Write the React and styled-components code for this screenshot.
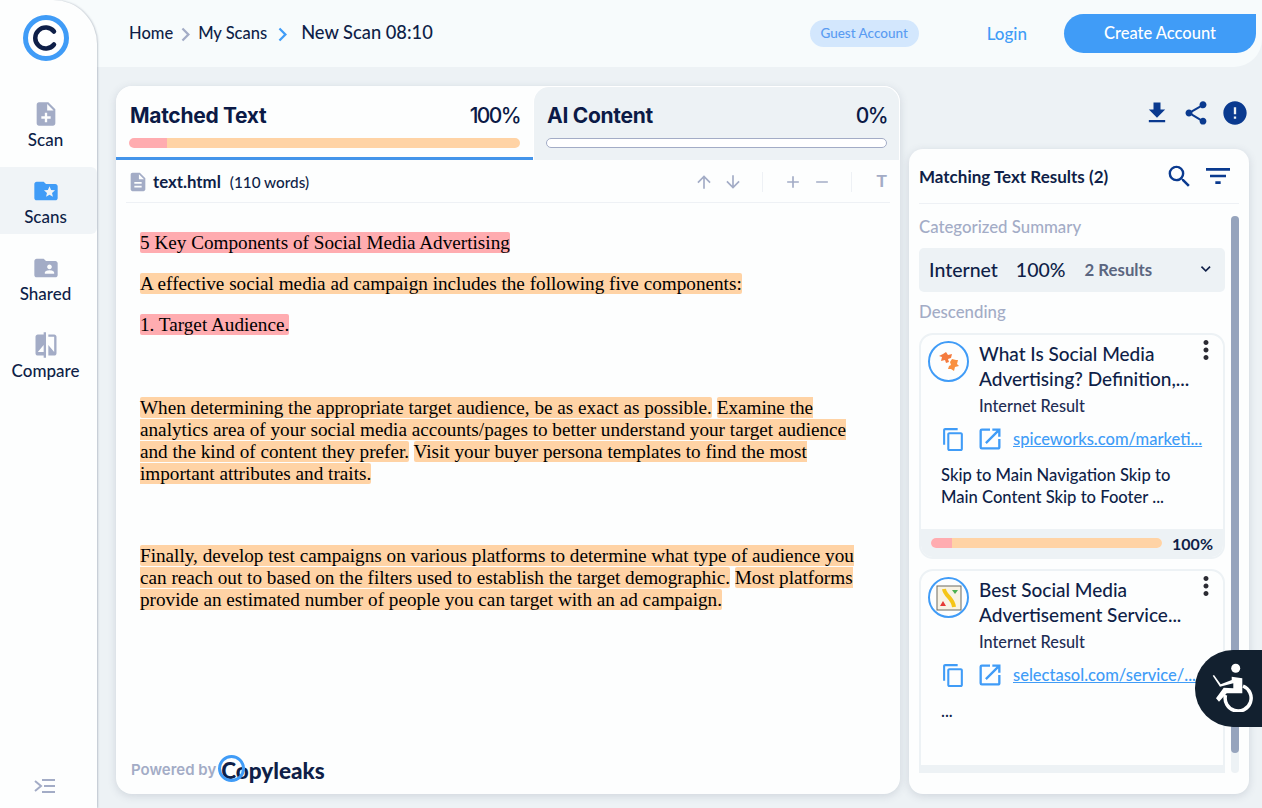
import React from 'react';
import styled, { createGlobalStyle } from 'styled-components';
import {
  MdNoteAdd, MdFolderSpecial, MdFolderShared, MdCompare, MdDescription, MdArrowUpward, MdArrowDownward,
  MdAdd, MdRemove, MdFileDownload, MdShare, MdError, MdSearch, MdFilterList, MdMoreVert, MdExpandMore,
  MdContentCopy, MdOpenInNew, MdChevronRight,
} from 'react-icons/md';

const GlobalStyle = createGlobalStyle`
  html, body { margin: 0; padding: 0; height: 100%; overflow: hidden; }
  body { font-family: Lato, "Open Sans", sans-serif; font-weight: 500; color: #0b1a46; }
  * { box-sizing: border-box; }
`;

const Shell = styled.div`
  width: 1262px;
  height: 808px;
  display: flex;
  position: relative;
  overflow: hidden;
  background: #edf2f5;
`;

const SideSlot = styled.div`
  width: 97px;
  flex: none;
  background: #f7fbfc;
  z-index: 2;
`;

const Sidebar = styled.aside`
  height: 100%;
  background: #fdfefe;
  border-top-right-radius: 44px;
  box-shadow: 1px 0 2px rgba(60, 75, 100, 0.28);
  display: flex;
  flex-direction: column;
  align-items: center;
  padding-top: 15px;
`;

const LogoMark = styled.svg`
  width: 46px;
  height: 46px;
  margin: 0 6px 29px 0;
`;

const NavItem = styled.div`
  width: 100%;
  height: 67px;
  margin-bottom: 10px;
  padding: 3px 6px 0 0;
  display: flex;
  flex-direction: column;
  align-items: center;
  justify-content: center;
  gap: 2px;
  font-size: 17px;
  line-height: 20px;
  color: #0f1f48;
  background: ${(p) => (p.$active ? '#f0f4f7' : 'transparent')};
  border-radius: ${(p) => (p.$active ? '0 6px 6px 0' : '0')};
  svg {
    font-size: 28px;
    color: ${(p) => (p.$active ? '#409cf7' : '#a3acc6')};
  }
`;

const CollapseIcon = styled.svg`
  width: 24px;
  height: 16px;
  margin: auto 7px 14px 0;
`;

const Body = styled.div`
  flex: 1;
  display: flex;
  flex-direction: column;
  min-width: 0;
`;

const TopBar = styled.header`
  height: 67px;
  flex: none;
  background: #f7fbfc;
  border-bottom-right-radius: 28px;
  display: flex;
  align-items: center;
  padding: 0 6px 1px 32px;
`;

const Crumb = styled.span`
  font-size: 16.5px;
  color: #0f1f48;
`;

const CrumbArrow = styled(MdChevronRight)`
  font-size: 27px;
  margin: 2px ${(p) => (p.$blue ? 0 : -1)}px 0 ${(p) => (p.$blue ? 2 : -1)}px;
  color: ${(p) => (p.$blue ? '#409cf7' : '#a3acc6')};
`;

const CrumbCurrent = styled.span`
  font-size: 18.3px;
  color: #0f1f48;
  margin-left: 5px;
  margin-bottom: 3px;
`;

const GuestPill = styled.span`
  margin-left: auto;
  height: 27px;
  width: 109px;
  display: flex;
  align-items: center;
  justify-content: center;
  border-radius: 14px;
  background: #d3e7fd;
  color: #5a9cf2;
  font-size: 13.5px;
`;

const LoginLink = styled.span`
  margin-left: 68px;
  color: #409cf7;
  font-size: 17px;
`;

const CreateButton = styled.span`
  margin-left: 37px;
  width: 192px;
  height: 39px;
  display: flex;
  align-items: center;
  justify-content: center;
  background: #409cf7;
  color: #fff;
  font-size: 16.5px;
  border-radius: 20px 0 20px 20px;
`;

const Content = styled.div`
  flex: 1;
  display: flex;
  gap: 9px;
  padding: 19px 13px 14px 19px;
  min-height: 0;
`;

const ReportPanel = styled.main`
  width: 784px;
  flex: none;
  display: flex;
  flex-direction: column;
  background: #fdfefe;
  border-radius: 16px;
  box-shadow: 0 2px 8px rgba(70, 85, 110, 0.18);
  overflow: hidden;
`;

const Tabs = styled.div`
  display: flex;
  height: 74px;
  flex: none;
`;

const Tab = styled.div`
  flex: ${(p) => (p.$active ? '0 0 417px' : '1')};
  padding: ${(p) => (p.$active ? '15px 13px 0' : '14px 12px 0')};
  background: ${(p) => (p.$active ? '#fdfefe' : '#edf2f5')};
  border-radius: 16px 16px 0 0;
  border: ${(p) => (p.$active ? '0' : '1px solid #fff')};
  border-bottom: ${(p) => (p.$active ? '3px solid #4394ea' : '0')};
`;

const TabHead = styled.div`
  display: flex;
  justify-content: space-between;
  align-items: center;
  font-family: Inter, sans-serif;
  font-size: 21px;
  line-height: 30px;
  color: #0b1a46;
`;

const TabTitle = styled.b`
  font-weight: 700;
  letter-spacing: -0.3px;
  margin-left: 1px;
`;

const Pct = styled.span`
  font-weight: 500;
  letter-spacing: -1.6px;
`;

const Bar = styled.div`
  height: ${(p) => p.$h || 10}px;
  flex: ${(p) => (p.$grow ? 1 : 'none')};
  margin-top: ${(p) => p.$top || 0}px;
  border-radius: 6px;
  overflow: hidden;
  display: flex;
  background: #fff;
  border: ${(p) => (p.$empty ? '1px solid #a3acc6' : '0')};
`;

const BarPink = styled.div`
  background: #ffacb0;
`;

const BarPeach = styled.div`
  flex: 1;
  background: #ffd3a5;
`;

const Toolbar = styled.div`
  height: 43px;
  flex: none;
  margin: 0 10px;
  padding: 1px 0 0 1px;
  border-bottom: 1px solid #eef1f5;
  display: flex;
  align-items: center;
  font-size: 15.3px;
  color: #0f1f48;
`;

const FileIcon = styled(MdDescription)`
  font-size: 22px;
  color: #a3acc6;
  margin-right: 4px;
`;

const FileName = styled.b`
  font-weight: 700;
  font-size: 16.8px;
  margin-right: 9px;
`;

const ToolGroup = styled.div`
  display: flex;
  align-items: center;
  gap: 9px;
  height: 20px;
  padding: ${(p) => (p.$last ? '0 3px 0 25px' : '0 19px 0 20px')};
  color: #a3acc6;
  font-size: 20px;
  border-left: ${(p) => (p.$first ? '0' : '1px solid #eef1f5')};
  margin-left: ${(p) => (p.$first ? 'auto' : '0')};
`;

const TextSizeIcon = styled.span`
  font-family: "Liberation Sans", sans-serif;
  font-weight: 700;
  font-size: 17px;
`;

const Document = styled.article`
  flex: 1;
  padding: 29px 40px 0 24px;
  font-family: "Liberation Serif", serif;
  font-weight: 400;
  font-size: 19.2px;
  line-height: 22px;
  color: #000;
`;

const Para = styled.p`
  margin: 0 0 19px;
  min-height: ${(p) => p.$h || 22}px;
`;

const Mark = styled.span`
  background: ${(p) => (p.$pink ? '#ffacb0' : '#ffd3a5')};
  border-radius: 2px;
`;

const Powered = styled.div`
  height: 52px;
  flex: none;
  display: flex;
  align-items: flex-start;
  padding: 15px 0 0 15px;
  color: #a3acc6;
  font-family: Inter, sans-serif;
  font-weight: 600;
  font-size: 15px;
  line-height: 26px;
`;

const Brand = styled.span`
  position: relative;
  margin-left: 4px;
  padding-left: 1px;
  color: #0f1f48;
  font-family: Lato, sans-serif;
  font-weight: 900;
  font-size: 22.5px;
  line-height: 28px;
`;

const BrandRing = styled.i`
  position: absolute;
  left: -2px;
  top: -2px;
  width: 27px;
  height: 27px;
  border-radius: 50%;
  border: 3px solid #409cf7;
`;

const SideColumn = styled.section`
  flex: 1;
  min-width: 0;
  display: flex;
  flex-direction: column;
`;

const ActionRow = styled.div`
  height: 63px;
  flex: none;
  display: flex;
  justify-content: flex-end;
  gap: 11px;
  padding: 13px 0 0 0;
  font-size: 28px;
  color: #0a3a8f;
`;

const ResultsPanel = styled.div`
  flex: 1;
  min-height: 0;
  background: #fdfefe;
  border-radius: 14px;
  box-shadow: 0 2px 8px rgba(70, 85, 110, 0.18);
  padding: 0 10px 21px;
  display: flex;
  flex-direction: column;
`;

const ResultsHead = styled.div`
  height: 55px;
  flex: none;
  display: flex;
  align-items: center;
  padding-right: 5px;
  border-bottom: 1px solid #eef1f5;
  font-size: 17px;
  font-weight: 700;
  color: #0f1f48;
`;

const HeadTitle = styled.span`
  flex: 1;
`;

const SearchIcon = styled(MdSearch)`
  font-size: 29px;
  color: #0a3a8f;
`;

const FilterIcon = styled(MdFilterList)`
  font-size: 32px;
  margin-left: 8px;
  color: #0a3a8f;
`;

const ResultsScroll = styled.div`
  flex: 1;
  min-height: 0;
  display: flex;
  gap: 6px;
  margin-top: 12px;
  overflow: hidden;
`;

const ResultsList = styled.div`
  width: 306px;
  flex: none;
  overflow: hidden;
`;

const Track = styled.div`
  width: 8px;
  border-radius: 4px;
  background: #edf2f5;
  display: flex;
`;

const Thumb = styled.div`
  width: 8px;
  height: 537px;
  border-radius: 4px;
  background: #96a4bd;
`;

const Caption = styled.div`
  font-size: 16.8px;
  line-height: 22px;
  color: #a3acc6;
`;

const Category = styled.div`
  height: 44px;
  margin: 10px 0 9px;
  padding: 0 10px 2px;
  border-radius: 5px;
  background: #edf2f5;
  display: flex;
  align-items: center;
  font-size: 19.5px;
  color: #0f1f48;
`;

const CategoryPct = styled.span`
  margin-left: 18px;
`;

const CategoryCount = styled.span`
  margin-left: 19px;
  font-size: 16.8px;
  font-weight: 700;
  color: #5b6680;
  flex: 1;
`;

const Card = styled.div`
  position: relative;
  height: ${(p) => p.$h}px;
  margin-top: ${(p) => p.$top}px;
  border: 2px solid #edf2f5;
  border-radius: 14px;
  display: flex;
  flex-direction: column;
  overflow: hidden;
  background: #fdfefe;
`;

const CardHead = styled.div`
  display: flex;
  padding: 6px 24px 0 7px;
`;

const Favicon = styled.div`
  width: 41px;
  height: 41px;
  flex: none;
  border-radius: 50%;
  border: 2px solid #409cf7;
  display: flex;
  align-items: center;
  justify-content: center;
`;

const CardInfo = styled.div`
  margin-left: 10px;
  min-width: 0;
`;

const CardTitle = styled.div`
  font-size: 19px;
  line-height: 25px;
  color: #0f1f48;
`;

const CardSource = styled.div`
  font-size: 16.3px;
  line-height: 22px;
  margin-top: 4px;
  color: #1f2d54;
`;

const Kebab = styled(MdMoreVert)`
  position: absolute;
  right: 2px;
  top: 0;
  font-size: 30px;
  color: #2b2b33;
`;

const LinkRow = styled.div`
  display: flex;
  align-items: center;
  height: 28px;
  margin-top: 8px;
  padding-left: 20px;
  color: #409cf7;
  font-size: 25px;
  gap: 10px;
`;

const OpenIcon = styled(MdOpenInNew)`
  font-size: 28px;
`;

const CardLink = styled.span`
  margin-left: -1px;
  font-size: 16.5px;
  text-decoration: underline;
  white-space: nowrap;
`;

const Snippet = styled.div`
  flex: 1;
  padding: 11px 30px 0 20px;
  font-size: 16.6px;
  line-height: 22px;
  color: #0f1f48;
`;

const CardFoot = styled.div`
  height: 28px;
  flex: none;
  display: flex;
  align-items: center;
  gap: 10px;
  padding: 0 10px;
  background: #edf2f5;
  font-size: 16px;
  font-weight: 700;
  color: #0f1f48;
`;

const AccessButton = styled.div`
  position: absolute;
  right: 0;
  top: 650px;
  width: 67px;
  height: 77px;
  background: #12202f;
  border-radius: 38px 0 0 38px;
  z-index: 3;
  padding: 12px 0 0 15px;
`;

const navItems = [
  { label: 'Scan', Icon: MdNoteAdd },
  { label: 'Scans', Icon: MdFolderSpecial, active: true },
  { label: 'Shared', Icon: MdFolderShared },
  { label: 'Compare', Icon: MdCompare },
];

const SpiceIcon = () => (
  <svg width="24" height="24" viewBox="0 0 24 24">
    <path d="M9 2l2 3 4-1-1 4-3 1 1 3-3 1-1-3-4 1 1-4-3-1 4-2z" fill="#f47b3e" />
    <path d="M15 9l4 1 2 0-1 4 2 2-4 1-1 4-3-2-3 0 1-3 2-1-1-3z" fill="#f9903f" />
  </svg>
);

const SelectaIcon = () => (
  <svg width="26" height="26" viewBox="0 0 26 26">
    <rect x="1" y="1" width="24" height="24" fill="#f8f3e4" stroke="#6d6a60" strokeWidth="1" />
    <path d="M8 4c1 7 9 9 10 18" stroke="#f5c518" strokeWidth="4" fill="none" />
    <path d="M16 5h6l-3 4z" fill="#4caf50" />
    <path d="M4 21h6l-3-5z" fill="#e53935" />
  </svg>
);

export default function App() {
  return (
    <Shell>
      <GlobalStyle />
      <SideSlot>
        <Sidebar>
          <LogoMark viewBox="0 0 46 46">
            <circle cx="23" cy="23" r="20.5" fill="#fff" stroke="#409cf7" strokeWidth="5" />
            <path d="M31 16.5a10.5 10.5 0 1 0 0 13" fill="none" stroke="#0f1f48" strokeWidth="4.5" strokeLinecap="round" />
          </LogoMark>
          {navItems.map(({ label, Icon, active }) => (
            <NavItem key={label} $active={active}>
              <Icon />
              {label}
            </NavItem>
          ))}
          <CollapseIcon viewBox="0 0 24 16" fill="none" stroke="#a3acc6" strokeWidth="2">
            <path d="M2 3l6 5-6 5M9 2h13M11 8h11M9 14h13" />
          </CollapseIcon>
        </Sidebar>
      </SideSlot>

      <Body>
        <TopBar>
          <Crumb>Home</Crumb>
          <CrumbArrow />
          <Crumb>My Scans</Crumb>
          <CrumbArrow $blue />
          <CrumbCurrent>New Scan 08:10</CrumbCurrent>
          <GuestPill>Guest Account</GuestPill>
          <LoginLink>Login</LoginLink>
          <CreateButton>Create Account</CreateButton>
        </TopBar>

        <Content>
          <ReportPanel>
            <Tabs>
              <Tab $active>
                <TabHead>
                  <TabTitle>Matched Text</TabTitle>
                  <Pct>100%</Pct>
                </TabHead>
                <Bar $top={7}>
                  <BarPink style={{ width: '38px' }} />
                  <BarPeach />
                </Bar>
              </Tab>
              <Tab>
                <TabHead>
                  <TabTitle>AI Content</TabTitle>
                  <Pct>0%</Pct>
                </TabHead>
                <Bar $top={7} $empty />
              </Tab>
            </Tabs>
            <Toolbar>
              <FileIcon />
              <FileName>text.html</FileName>
              (110 words)
              <ToolGroup $first>
                <MdArrowUpward />
                <MdArrowDownward />
              </ToolGroup>
              <ToolGroup>
                <MdAdd />
                <MdRemove />
              </ToolGroup>
              <ToolGroup $last>
                <TextSizeIcon>T</TextSizeIcon>
              </ToolGroup>
            </Toolbar>
            <Document>
              <Para><Mark $pink>5 Key Components of Social Media Advertising</Mark></Para>
              <Para><Mark>A effective social media ad campaign includes the following five components:</Mark></Para>
              <Para><Mark $pink>1. Target Audience.</Mark></Para>
              <Para $h={23} />
              <Para>
                <Mark>When determining the appropriate target audience, be as exact as possible.</Mark>{' '}
                <Mark>Examine the analytics area of your social media accounts/pages to better understand your target audience and the kind of content they prefer.</Mark>{' '}
                <Mark>Visit your buyer persona templates to find the most important attributes and traits.</Mark>
              </Para>
              <Para />
              <Para>
                <Mark>Finally, develop test campaigns on various platforms to determine what type of audience you can reach out to based on the filters used to establish the target demographic.</Mark>{' '}
                <Mark>Most platforms provide an estimated number of people you can target with an ad campaign.</Mark>
              </Para>
            </Document>
            <Powered>
              Powered by
              <Brand>
                <BrandRing />
                Copyleaks
              </Brand>
            </Powered>
          </ReportPanel>

          <SideColumn>
            <ActionRow>
              <MdFileDownload />
              <MdShare />
              <MdError />
            </ActionRow>
            <ResultsPanel>
              <ResultsHead>
                <HeadTitle>Matching Text Results (2)</HeadTitle>
                <SearchIcon />
                <FilterIcon />
              </ResultsHead>
              <ResultsScroll>
                <ResultsList>
                  <Caption>Categorized Summary</Caption>
                  <Category>
                    Internet
                    <CategoryPct>100%</CategoryPct>
                    <CategoryCount>2 Results</CategoryCount>
                    <MdExpandMore />
                  </Category>
                  <Caption>Descending</Caption>
                  <Card $h={226} $top={10}>
                    <CardHead>
                      <Favicon><SpiceIcon /></Favicon>
                      <CardInfo>
                        <CardTitle>What Is Social Media Advertising? Definition,...</CardTitle>
                        <CardSource>Internet Result</CardSource>
                      </CardInfo>
                      <Kebab />
                    </CardHead>
                    <LinkRow>
                      <MdContentCopy />
                      <OpenIcon />
                      <CardLink>spiceworks.com/marketi...</CardLink>
                    </LinkRow>
                    <Snippet>Skip to Main Navigation Skip to Main Content Skip to Footer ...</Snippet>
                    <CardFoot>
                      <Bar $grow>
                        <BarPink style={{ width: '21px' }} />
                        <BarPeach />
                      </Bar>
                      100%
                    </CardFoot>
                  </Card>
                  <Card $h={226} $top={10}>
                    <CardHead>
                      <Favicon><SelectaIcon /></Favicon>
                      <CardInfo>
                        <CardTitle>Best Social Media Advertisement Service...</CardTitle>
                        <CardSource>Internet Result</CardSource>
                      </CardInfo>
                      <Kebab />
                    </CardHead>
                    <LinkRow>
                      <MdContentCopy />
                      <OpenIcon />
                      <CardLink>selectasol.com/service/...</CardLink>
                    </LinkRow>
                    <Snippet>...</Snippet>
                    <CardFoot />
                  </Card>
                </ResultsList>
                <Track><Thumb /></Track>
              </ResultsScroll>
            </ResultsPanel>
          </SideColumn>
        </Content>
      </Body>

      <AccessButton>
        <svg width="45" height="50" viewBox="0 0 45 50">
          <circle cx="25.7" cy="6.3" r="4.5" fill="#fff" />
          <path
            fill="#fff"
            d="M21.7 14.7L32.3 16.3 32.3 31.3 16.7 31.3 9 39.7 6 36.3 13.7 25.7 23.3 26.3 23.3 21.3 10 24.7 2.7 13.7 4 13 10.7 22.3 21.7 18z"
          />
          <path d="M33 24A13 13 0 1 1 15.5 33" fill="none" stroke="#fff" strokeWidth="3.5" />
        </svg>
      </AccessButton>
    </Shell>
  );
}
